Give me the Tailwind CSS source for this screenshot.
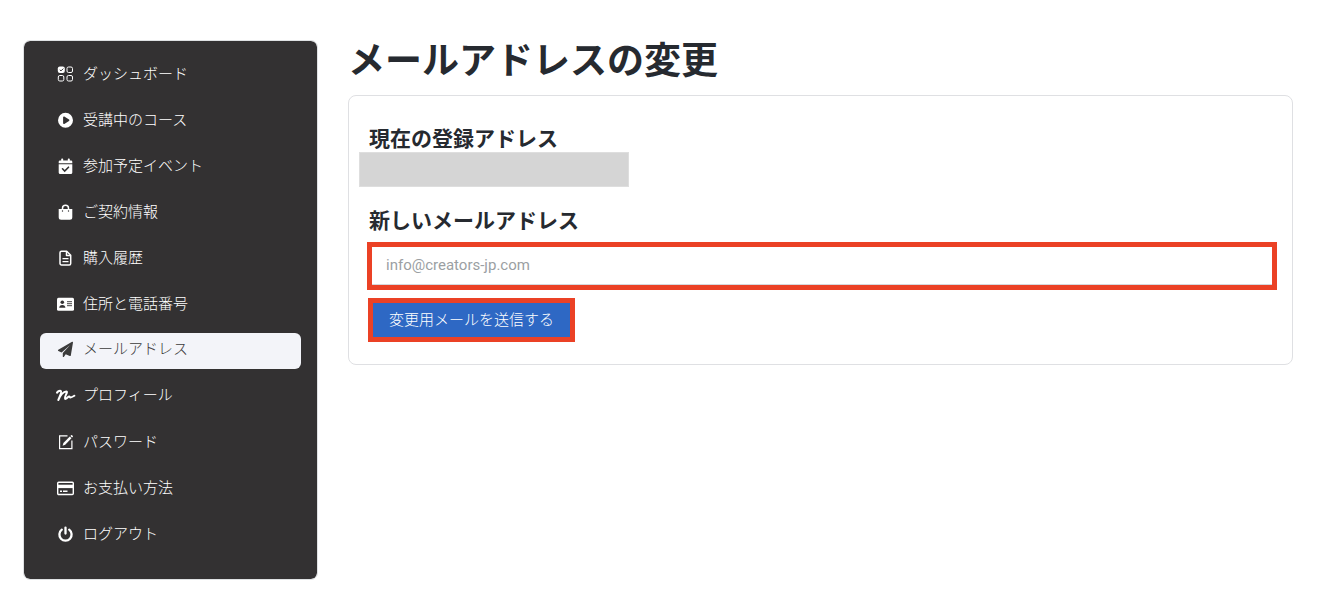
<!DOCTYPE html>
<html lang="ja">
<head>
<meta charset="utf-8">
<meta name="viewport" content="width=device-width, initial-scale=1">
<title>メールアドレスの変更</title>
<script src="https://cdn.jsdelivr.net/npm/@tailwindcss/browser@4"></script>
</head>
<body class="bg-white font-['Roboto','Noto_Sans_CJK_JP',sans-serif] text-[#262a30]">
<div class="flex items-start gap-[31px] pt-[41px] pr-[27px] pb-[27px] pl-6">
  <nav aria-label="アカウントメニュー" class="w-[293px] shrink-0 rounded-md bg-[#333132] px-4 pt-4 pb-[26px] outline outline-[#dfe1e3]">
    <ul class="flex flex-col gap-2.5 text-[15px] leading-[22px] font-light text-white">
      <li><a href="#" class="flex h-9 items-center gap-2 rounded-md px-[17px] pb-0.5">
        <svg class="size-[18px] shrink-0" viewBox="0 0 18 18" fill="none" stroke="currentColor" aria-hidden="true"><rect x=".8" y="1.5" width="7" height="6.500" rx="2" fill="currentColor" stroke="none"/><path d="M2.800 4.800l1.200 1.100 2.300-2.300" stroke="#333132"/><rect x="10" y="2" width="5.500" height="5.500" rx="1.500"/><rect x="1.300" y="10.500" width="5.500" height="5.500" rx="1.500"/><rect x="10" y="10.500" width="5.500" height="5.500" rx="1.500"/></svg>
        ダッシュボード</a></li>
      <li><a href="#" class="flex h-9 items-center gap-2 rounded-md px-[17px] pb-0.5">
        <svg class="size-[18px] shrink-0" viewBox="0 0 18 18" fill="currentColor" aria-hidden="true"><path fill-rule="evenodd" d="M8.500 1.700a7.500 7.500 0 1 1 0 15 7.500 7.500 0 0 1 0-15zM6.100 6.200v6c0 .7.700 1 1.200.7l4.700-3c.5-.3.500-1.100 0-1.400L7.300 5.500c-.5-.3-1.200 0-1.200.7z"/></svg>
        受講中のコース</a></li>
      <li><a href="#" class="flex h-9 items-center gap-2 rounded-md px-[17px] pb-0.5">
        <svg class="size-[18px] shrink-0" viewBox="0 0 18 18" fill="currentColor" aria-hidden="true"><path d="M4.200 2.400c0-1.200 2-1.200 2 0V3.500h4.600V2.400c0-1.200 2-1.200 2 0V3.500H14c.8 0 1.300.6 1.300 1.400V6.200H1.700V4.900c0-.8.500-1.400 1.300-1.400h1.200z"/><path d="M1.700 7.200h13.600v8.300c0 .8-.6 1.500-1.400 1.500H3.100c-.8 0-1.400-.7-1.400-1.500z"/><path d="M5.500 11.800l2.200 2.200 3.800-3.800" fill="none" stroke="#333132" stroke-width="1.600" stroke-linecap="round"/></svg>
        参加予定イベント</a></li>
      <li><a href="#" class="flex h-9 items-center gap-2 rounded-md px-[17px] pb-0.5">
        <svg class="size-[18px] shrink-0" viewBox="0 0 18 18" fill="currentColor" aria-hidden="true"><path d="M1.700 6h13.600v8.200a2.500 2.500 0 0 1-2.500 2.500H4.200a2.500 2.500 0 0 1-2.500-2.500z"/><path d="M5.500 7.500V5.300a3 3 0 0 1 6 0V7.500" fill="none" stroke="currentColor" stroke-width="1.500"/><circle cx="5.500" cy="8" r=".7" fill="#333132"/><circle cx="11.500" cy="8" r=".7" fill="#333132"/></svg>
        ご契約情報</a></li>
      <li><a href="#" class="flex h-9 items-center gap-2 rounded-md px-[17px] pb-0.5">
        <svg class="size-[18px] shrink-0" viewBox="0 0 18 18" fill="none" stroke="currentColor" stroke-width="1.500" stroke-linejoin="round" aria-hidden="true"><path d="M4.500 2.300h5.200l4 4v8.200c0 .8-.6 1.500-1.500 1.500H4.500c-.8 0-1.500-.7-1.500-1.500V3.800c0-.8.7-1.500 1.500-1.500z"/><path d="M9.500 2.600v4h4"/><path d="M5.500 9.700h6M5.500 12.700h6" stroke-width="1.300"/></svg>
        購入履歴</a></li>
      <li><a href="#" class="flex h-9 items-center gap-2 rounded-md px-[17px] pb-0.5">
        <svg class="size-[18px] shrink-0" viewBox="0 0 18 18" aria-hidden="true"><rect x="0" y="2.700" width="17" height="13" rx="1.500" fill="currentColor"/><g fill="#333132"><circle cx="5.300" cy="7.200" r="1.800"/><path d="M2.200 12.700c0-1.700 1.200-2.800 3.100-2.800s3.100 1.100 3.100 2.800z"/></g><path d="M10 6.700h5M10 8.700h5M10 10.700h5" stroke="#333132" stroke-width=".9"/></svg>
        住所と電話番号</a></li>
      <li><a href="#" aria-current="page" class="flex h-9 items-center gap-2 rounded-md bg-[#f3f4f9] px-[17px] pb-1 text-[#3b3b3b]">
        <svg class="size-[18px] shrink-0" viewBox="0 0 18 18" fill="currentColor" aria-hidden="true"><path d="M16 2.400L13.800 15.500c-.1.500-.6.700-1 .5l-4.100-1.700-1.900 2.600c-.3.400-1 .2-1-.4v-3.400l7.400-8.200-8.600 7.500-3.200-1.300c-.6-.3-.6-1.100-.1-1.400L15.100 1.800c.5-.3 1 .1.900.6z"/></svg>
        メールアドレス</a></li>
      <li><a href="#" class="flex h-9 items-center gap-2 rounded-md px-[17px] pb-1">
        <svg class="size-[18px] shrink-0 overflow-visible" viewBox="0 0 18 18" fill="none" stroke="currentColor" stroke-width="2" stroke-linecap="round" stroke-linejoin="round" aria-hidden="true"><path d="M0 6.600C1 5 3.200 4.300 4 5.100S3 10 1.300 14C3.500 9 6.500 5.800 9.300 5.600 11.500 5.500 7 10.800 8 12.600c.9 1.300 3-2.300 4.300-2.100.8.200.2 1 1.100 1 1.300-.1 2.400-.8 4-1.800"/></svg>
        プロフィール</a></li>
      <li><a href="#" class="flex h-9 items-center gap-2 rounded-md px-[17px] pb-0.5">
        <svg class="size-[18px] shrink-0" viewBox="0 0 18 18" fill="none" stroke="currentColor" stroke-width="1.200" aria-hidden="true"><path d="M10.500 2.900H2.600v12.700h12.300V7.500"/><path d="M5.600 12.700l.8-2.800 6.400-6.300 1.700 1.700-6.300 6.400z" fill="currentColor" stroke="none"/><path d="M13.400 3l.9-.9c.5-.4 2.100 1 1.600 1.600l-.9.900z" fill="currentColor" stroke="none"/></svg>
        パスワード</a></li>
      <li><a href="#" class="flex h-9 items-center gap-2 rounded-md px-[17px] pb-0.5">
        <svg class="size-[18px] shrink-0" viewBox="0 0 18 18" fill="none" stroke="currentColor" aria-hidden="true"><rect x=".7" y="3.200" width="15.600" height="12.300" rx="1" stroke-width="1.400"/><path d="M.5 7.400h16" stroke-width="3.400"/><path d="M3 12.300h2M6 12.300h4.500" stroke-width="1.600"/></svg>
        お支払い方法</a></li>
      <li><a href="#" class="flex h-9 items-center gap-2 rounded-md px-[17px] pb-0.5">
        <svg class="size-[18px] shrink-0" viewBox="0 0 18 18" fill="none" stroke="currentColor" stroke-width="2.300" stroke-linecap="round" aria-hidden="true"><path d="M8.500 2.600v6M4.800 4.700a6.100 6.100 0 1 0 7.400 0"/></svg>
        ログアウト</a></li>
    </ul>
  </nav>

  <main class="min-w-0 flex-1">
    <h1 class="-mt-px text-[37px] leading-[44px] font-bold">メールアドレスの変更</h1>
    <section class="mt-[11px] rounded-lg border border-[#dfe0e3] px-2.5 pt-7 pb-[22px]">
      <h2 class="pl-2.5 text-[21px] leading-[30px] font-bold">現在の登録アドレス</h2>
      <div class="-mt-[2px] h-[35px] w-[270px] border border-[#dedede] bg-[#d5d5d5]"></div>
      <form class="mt-5">
        <label for="email" class="block pl-2.5 text-[21px] leading-7 font-bold">新しいメールアドレス</label>
        <div class="mt-[7px] mr-[5px] ml-2 border-5 border-[#eb4125]">
          <input id="email" type="email" placeholder="info@creators-jp.com" class="block h-[38px] w-full border-b border-[#d5d8dc] px-3.5 pb-0.5 text-[15px] text-[#555] outline-none placeholder:text-[#9b9fa3]">
        </div>
        <button type="submit" class="mt-2 ml-[9px] block border-5 border-[#eb4125] bg-[#2e68c4] px-4 py-1.5 text-[15px] leading-[22px] font-light text-white">変更用メールを送信する</button>
      </form>
    </section>
  </main>
</div>
</body>
</html>
